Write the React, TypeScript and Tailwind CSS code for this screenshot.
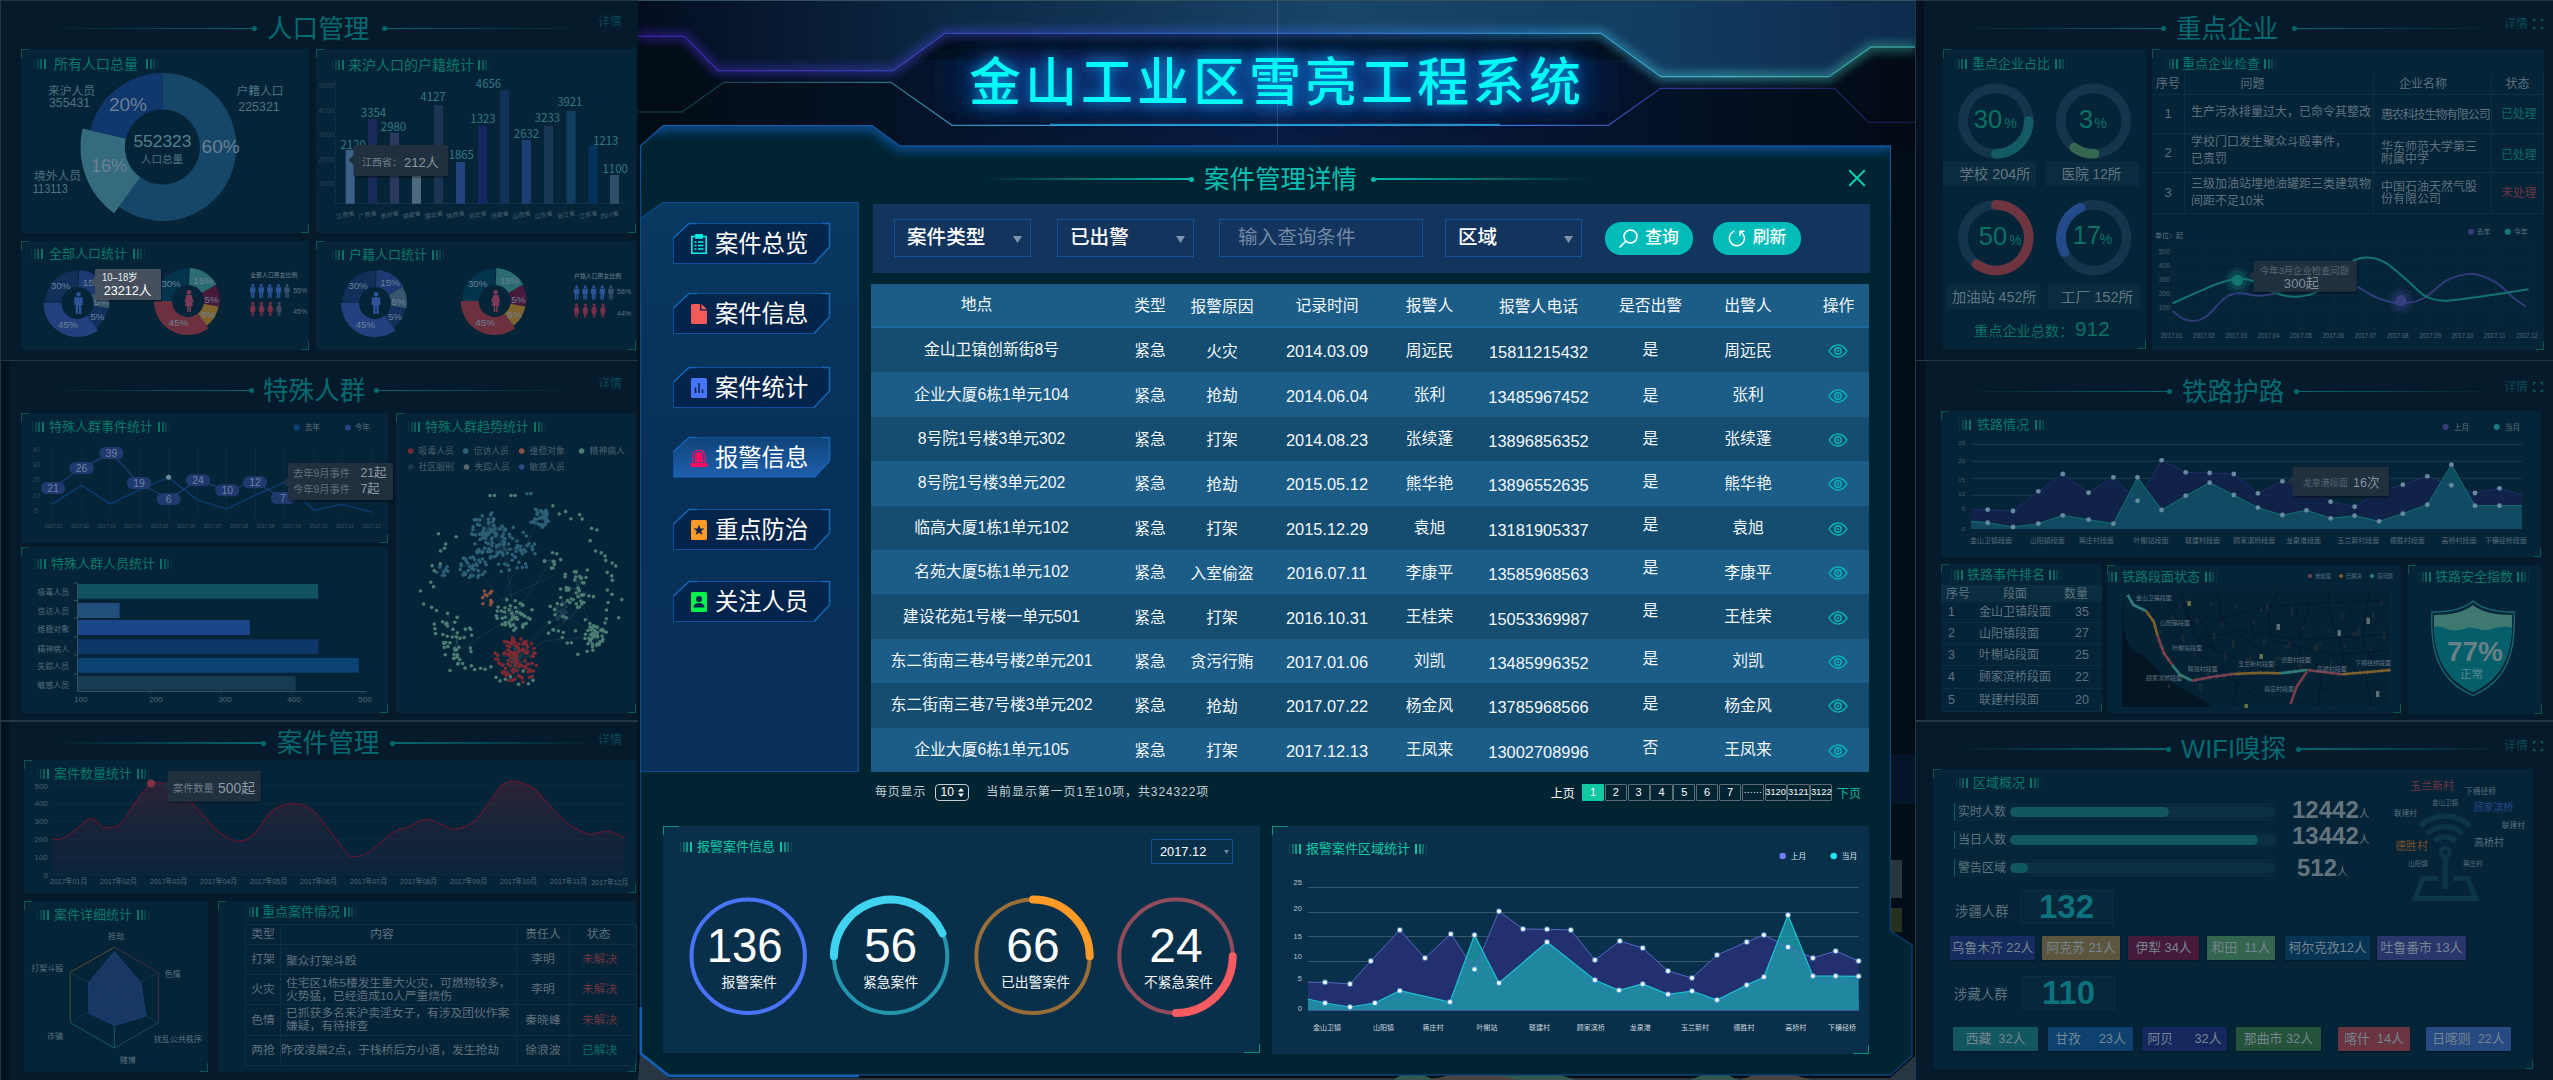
import React from 'react';

type Pt = [number, number];

/* ---------- geometry helpers ---------- */
const polar = (cx: number, cy: number, r: number, deg: number): Pt => {
  const a = ((deg - 90) * Math.PI) / 180;
  return [cx + r * Math.cos(a), cy + r * Math.sin(a)];
};
const arc = (cx: number, cy: number, r: number, a0: number, a1: number) => {
  const [x0, y0] = polar(cx, cy, r, a0);
  const [x1, y1] = polar(cx, cy, r, a1);
  return `M${x0} ${y0}A${r} ${r} 0 ${a1 - a0 > 180 ? 1 : 0} 1 ${x1} ${y1}`;
};
const sector = (cx: number, cy: number, r: number, ri: number, a0: number, a1: number) => {
  const [x0, y0] = polar(cx, cy, r, a0);
  const [x1, y1] = polar(cx, cy, r, a1);
  const [x2, y2] = polar(cx, cy, ri, a1);
  const [x3, y3] = polar(cx, cy, ri, a0);
  const big = a1 - a0 > 180 ? 1 : 0;
  return `M${x0} ${y0}A${r} ${r} 0 ${big} 1 ${x1} ${y1}L${x2} ${y2}A${ri} ${ri} 0 ${big} 0 ${x3} ${y3}Z`;
};
const line = (pts: Pt[]) => 'M' + pts.map((p) => p.join(' ')).join('L');
const curve = (p: Pt[]) => {
  let d = `M${p[0][0]} ${p[0][1]}`;
  for (let i = 0; i < p.length - 1; i++) {
    const a = p[i - 1] || p[i];
    const b = p[i];
    const c = p[i + 1];
    const e = p[i + 2] || c;
    d += `C${b[0] + (c[0] - a[0]) / 6} ${b[1] + (c[1] - a[1]) / 6} ${c[0] - (e[0] - b[0]) / 6} ${c[1] - (e[1] - b[1]) / 6} ${c[0]} ${c[1]}`;
  }
  return d;
};

/* Chart label: y is the vertical middle of the glyphs, w an optional exact width */
function T({ x, y, s, c = '#5d727f', a = 'middle', w, b, children }: {
  x: number; y: number; s: number; c?: string; a?: 'start' | 'middle' | 'end'; w?: number; b?: boolean; children: React.ReactNode;
}) {
  return (
    <text x={x} y={y + s * 0.36} fontSize={s} fill={c} textAnchor={a} fontWeight={b ? 700 : 400}
      {...(w ? { textLength: w, lengthAdjust: 'spacingAndGlyphs' as const } : {})}>
      {children}
    </text>
  );
}

const Chart = ({ box, children }: { box: string; children: React.ReactNode }) => (
  <svg viewBox={box} className="h-full w-full overflow-visible" preserveAspectRatio="none">{children}</svg>
);

/* ---------- shared pieces ---------- */
function Bars({ flip, bright }: { flip?: boolean; bright?: boolean }) {
  const col = bright ? 'bg-[#10c39c]' : 'bg-[#0b7565]';
  return (
    <span className={`flex h-[10px] w-[12px] items-stretch justify-between ${flip ? 'flex-row-reverse' : ''}`}>
      <i className={`w-px opacity-20 ${col}`} />
      <i className={`w-[2px] opacity-40 ${col}`} />
      <i className={`w-[2px] opacity-70 ${col}`} />
      <i className={`w-[2px] ${col}`} />
    </span>
  );
}

function Heading({ pos, bright, size = 'text-[13px]', gap = 'gap-[6px]', children }: {
  pos: string; bright?: boolean; size?: string; gap?: string; children: React.ReactNode;
}) {
  return (
    <h3 className={`z-10 flex items-center self-start whitespace-nowrap ${gap} ${size} ${pos} ${bright ? 'text-[#10c9a4]' : 'text-[#0a7868]'}`}>
      <Bars bright={bright} />
      <span className="h-4 leading-4">{children}</span>
      <Bars flip bright={bright} />
    </h3>
  );
}

function Card({ size, bright, children }: { size: string; bright?: boolean; children: React.ReactNode }) {
  const edge = bright ? 'border-[#0f8f7c]' : 'border-[#0a5650]';
  return (
    <div className={`relative grid shrink-0 grid-cols-1 grid-rows-1 *:[grid-area:1/1] ${bright ? 'bg-[#09304a]' : 'bg-[#052438]'} ${size}`}>
      <i className={`h-[9px] self-start border-l border-t ${edge} ${bright ? 'w-4' : 'w-2'}`} />
      <i className={`h-[9px] self-end justify-self-end border-b border-r ${edge} ${bright ? 'w-4' : 'w-2'}`} />
      {children}
    </div>
  );
}

const Dot = ({ bright }: { bright?: boolean }) => (
  <i className={`size-[5px] shrink-0 rounded-full ${bright ? 'bg-[#06bdb0]' : 'bg-[#05666d]'}`} />
);

function Panel({ title, frame, head, gap = 'mx-[10px]', detail, expand, children }: {
  title: string; frame: string; head: string; gap?: string; detail: string; expand?: boolean; children: React.ReactNode;
}) {
  return (
    <section className={`h-[360px] w-full border-[#253542] bg-[#051a2a] ${frame}`}>
      <header className={`flex items-center ${head}`}>
        <i className="h-[1.5px] w-[211px] shrink-0 bg-gradient-to-r from-transparent to-[#05666d]" />
        <Dot />
        <h2 className={`shrink-0 whitespace-nowrap text-[25.6px] leading-[28px] text-[#056a72] ${gap}`}>{title}</h2>
        <Dot />
        <i className="h-[1.5px] min-w-0 shrink basis-[206px] bg-gradient-to-r from-[#05666d] to-transparent" />
        <span className={`ml-auto flex shrink-0 items-center gap-[5px] self-start whitespace-nowrap text-[12px] leading-4 text-[#0a4855] ${detail}`}>
          详情
          {expand && (
            <svg viewBox="0 0 10 10" className="size-[10px]" fill="none" stroke="#0a5a5e" strokeWidth="1.2">
              <path d="M.6 3V.6H3M7 .6h2.4V3M9.4 7v2.4H7M3 9.4H.6V7" />
            </svg>
          )}
        </span>
      </header>
      {children}
    </section>
  );
}

function Tip({ x, y, w, h, py, light, children }: { x: number; y: number; w: number; h: number; py: number; light?: boolean; children: React.ReactNode }) {
  const f = light ? '#454f5e' : '#21303f';
  return (
    <g>
      <rect x={x + 1} y={y + 2} width={w} height={h} fill="#000" opacity=".3" />
      <rect x={x} y={y} width={w} height={h} rx="1" fill={f} />
      <path d={`M${x - 5} ${py}l6 -6v12z`} fill={f} />
      {children}
    </g>
  );
}

/* ---------- population ---------- */
const Person = ({ x, y, h, c, f }: { x: number; y: number; h: number; c: string; f?: boolean }) => (
  <g transform={`translate(${x} ${y}) scale(${h / 22})`} fill={c}>
    <circle cx="0" cy="2.3" r="2.3" />
    {f ? <path d="M-2.5 5h5l2.2 7-1.4.5-1-2.5 1.7 6H2v6H.4v-6H-.4v6H-2v-6h-2l1.7-6-1 2.5-1.4-.5z" />
      : <path d="M-4.3 5.2h8.6V13H2.8v9H.4v-8h-.8v8h-2.4v-9h-1.5z" />}
  </g>
);

const MALE = ['#1d3b72', '#38566f', '#12305c', '#23407f', '#10305a'];
const FEMALE = ['#2b6c70', '#471a3c', '#80622f', '#6c303f', '#03344e'];

function MiniDonut({ cx, cy, colors, female }: { cx: number; cy: number; colors: string[]; female?: boolean }) {
  const seg: [number, number, number][] = [[3, 60, 33], [60, 100, 32], [100, 143, 31], [143, 270, 34], [270, 361, 32.5]];
  const lab: [number, number, string][] = [[15, -20.5, '15%'], [23.7, -1.5, '5%'], [20, 13, '5%'], [-9.6, 21, '45%'], [-17, -17.5, '30%']];
  return (
    <g>
      {seg.map(([a, b, r], i) => <path key={i} d={sector(cx, cy, r, 16, a, b)} fill={colors[i]} />)}
      {lab.map(([dx, dy, t], i) => <T key={i} x={cx + dx} y={cy + dy} s={9.8} c="#6c8197">{t}</T>)}
      <Person x={cx + 1} y={cy - 11} h={22} c={female ? '#7d3a58' : '#2c5499'} f={female} />
    </g>
  );
}

function Ratio({ x, y, title, a, b }: { x: number; y: number; title: string; a: string; b: string }) {
  return (
    <g>
      <T x={x - 2.5} y={y} s={6} a="start" c="#71858f" w={title.length * 5.9}>{title}</T>
      {[0, 1, 2, 3, 4].map((i) => <Person key={i} x={x + i * 8.6} y={y + 9.5} h={14} c={i === 4 ? '#34506c' : '#2c5499'} />)}
      {[0, 1, 2, 3].map((i) => <Person key={i} x={x + i * 8.8} y={y + 27.5} h={14} c={i === 3 && a === '55%' ? '#3f4a58' : '#7d2f48'} f />)}
      <T x={x + 40.5} y={y + 15.5} s={7} a="start">{a}</T>
      <T x={x + 40.5} y={y + 37} s={7} a="start">{b}</T>
    </g>
  );
}

const PROVINCES: [string, number, number, string, string, number, number][] = [
  ['江西省', 345.7, 150, '#3a6087', '2120', 353.2, 145.3], ['广西省', 368, 119, '#1a2a58', '3354', 373.5, 112.7],
  ['贵州省', 390, 132.7, '#2a3a5e', '2980', 393.5, 127], ['湖南省', 412, 172, '#4f6980', '', 411, 168],
  ['湖北省', 434, 105, '#1c3352', '4127', 433, 96.7], ['陕西省', 456, 162, '#23437d', '1865', 461.3, 155],
  ['河北省', 478, 125.7, '#14275f', '1323', 483, 119], ['河南省', 500, 90.3, '#10325a', '4656', 488.5, 84],
  ['山西省', 522, 140, '#1b3f74', '2632', 526.5, 134], ['山东省', 544, 125.7, '#1a3756', '3233', 547.5, 118],
  ['浙江省', 566.5, 111, '#123d5e', '3921', 569.8, 102], ['江苏省', 588.6, 145.3, '#03335c', '1213', 605.8, 140.7],
  ['四川省', 610, 175, '#2f5068', '1100', 615.2, 169.3],
];

function Population() {
  return (
    <Panel title="人口管理" frame="border-l border-t" head="h-12 pl-[40px] pt-[7px]" gap="ml-[10px] mr-[13px]" detail="mt-[6px] pr-[16px]">
      <div className="grid grid-cols-[288px_320px] grid-rows-[184px_109px] gap-x-[7px] gap-y-2 pl-5">
        <Card size="">
          <Heading pos="pl-[13px] pt-[7px]" size="text-[14px]" gap="gap-[8px]">所有人口总量</Heading>
          <Chart box="21 49 288 184">
            <path d={sector(162.4, 147, 74, 37.5, 0, 216)} fill="#164768" />
            <path d={sector(162.4, 147, 82, 37.5, 216, 283)} fill="#356b7f" />
            <path d={sector(162.4, 147, 74, 37.5, 283, 360)} fill="#10376e" />
            <T x={71.5} y={90.7} s={11.8} c="#4b7581">来沪人员</T>
            <T x={69.6} y={102.7} s={12.4} c="#4b7581">355431</T>
            <T x={260} y={90.7} s={11.8} c="#4b7581">户籍人口</T>
            <T x={259} y={106.7} s={12.4} c="#4b7581">225321</T>
            <T x={57.5} y={175.7} s={11.8} c="#4b7581">境外人员</T>
            <T x={50.3} y={189} s={12.4} c="#4b7581" w={35}>113113</T>
            <T x={128} y={103.7} s={19} c="#6c8093">20%</T>
            <T x={220.6} y={145.7} s={19} c="#6c8093">60%</T>
            <T x={109} y={165.7} s={18} c="#6c8093">16%</T>
            <T x={162.4} y={140.7} s={17.4} c="#52828d">552323</T>
            <T x={162} y={159.3} s={10.6} c="#4b7581">人口总量</T>
          </Chart>
        </Card>
        <Card size="">
          <Heading pos="pl-[16px] pt-[8px]" size="text-[14px]" gap="gap-[4px]">来沪人口的户籍统计</Heading>
          <Chart box="316 49 320 184">
            {[5000, 4000, 3000, 2000, 1000].map((v, i) => <T key={v} x={334} y={85.7 + i * 24.5} s={7} a="end" c="#2c4656">{v}</T>)}
            <path d="M335.2 79V203.5H625" stroke="#123347" fill="none" />
            {PROVINCES.map(([n, x, y, f, v, lx, ly]) => (
              <g key={n}>
                <rect x={x} y={y} width="9" height={203.7 - y} fill={f} />
                {v && <text x={lx} y={ly + 4} fontSize="11.4" textAnchor="middle" fill="#357a84" className="[font-family:'Noto_Sans_CJK_SC']">{v}</text>}
                <text transform={`translate(${x} 217) rotate(-12)`} fontSize="6.2" textAnchor="middle" fill="#4a626f">{n}</text>
              </g>
            ))}
            <Tip x={353.5} y={145} w={95} h={31} py={160}>
              <T x={362} y={162} s={10} a="start" c="#71808c">江西省：</T>
              <T x={404} y={162} s={13} a="start" c="#8a97a1">212人</T>
            </Tip>
          </Chart>
        </Card>
        <Card size="">
          <Heading pos="pl-[10px] pt-[5px]">全部人口统计</Heading>
          <Chart box="21 241 288 109">
            <MiniDonut cx={77.5} cy={303} colors={MALE} />
            <MiniDonut cx={188} cy={301} colors={FEMALE} female />
            <Ratio x={252.7} y={274.5} title="全部人口男女比例" a="55%" b="45%" />
            <Tip x={95} y={269} w={66} h={31} py={282} light>
              <T x={102} y={277.7} s={10} a="start" c="#e8edf0" w={35.5}>10–18岁</T>
              <T x={103.7} y={290.7} s={13} a="start" c="#fff" w={47.7}>23212人</T>
            </Tip>
          </Chart>
        </Card>
        <Card size="">
          <Heading pos="pl-[16px] pt-[6px]" gap="gap-[5px]">户籍人口统计</Heading>
          <Chart box="316 241 320 109">
            <MiniDonut cx={375} cy={303} colors={MALE} />
            <MiniDonut cx={494.7} cy={301} colors={FEMALE} female />
            <Ratio x={576.5} y={276} title="户籍人口男女比例" a="56%" b="44%" />
          </Chart>
        </Card>
      </div>
    </Panel>
  );
}

/* ---------- special groups ---------- */
const BUBBLES: [number, number, number][] = [[21, 53, 488], [26, 81.6, 468], [39, 111.4, 453], [19, 139, 483], [6, 168.6, 499], [24, 198, 480.3], [10, 227.3, 490.3], [12, 255, 482.3], [7, 283, 498]];
const LAST_YEAR: Pt[] = [[52, 504], [81.6, 485.3], [110, 504], [139.6, 490], [168.6, 477.3], [197.5, 500], [226.5, 509], [255.5, 495], [284.5, 482.3], [314, 510.3], [342, 504.3], [372, 512.3]];
const GROUPS: [string, number, number, number, string, number][] = [
  ['吸毒人员', 584, 14.7, 318, '#125260', 592.3], ['信访人员', 603, 15, 119.6, '#224e7c', 611.3], ['维稳对象', 620, 15, 249.8, '#1c4688', 628.7],
  ['精神病人', 639.3, 14.7, 318.4, '#0c3768', 648.7], ['失踪人员', 658, 14.7, 358.8, '#0b4373', 666.3], ['敏感人员', 676, 14.7, 295.5, '#173b50', 685],
];
const KINDS: [string, string, number, number][] = [
  ['吸毒人员', '#7c2932', 410.6, 451], ['信访人员', '#2c6076', 465.7, 451], ['维稳对象', '#8a5440', 521.6, 451], ['精神病人', '#4b7d72', 581.6, 451],
  ['社区服刑', '#1a3650', 410.6, 467], ['失踪人员', '#5c666a', 466.5, 467], ['敏感人员', '#2a488c', 521.6, 467],
];

const makeNetwork = () => {
  let seed = 7;
  const rnd = () => {
    seed = (seed * 1664525 + 1013904223) % 4294967296;
    return seed / 4294967296;
  };
  const dots: [number, number, string][] = [];
  const links: [number, number, number, number][] = [];
  const clusters: [number, number, number, number, number, string, number][] = [
    [487.8, 531, 18, 19, 46, '#2c6076', 0.5], [539.6, 518, 10, 10, 38, '#2c6076', 0.3], [506, 550, 32, 24, 84, '#2c6076', 0.25],
    [473, 567, 14, 12, 36, '#2c6076', 0.3], [442, 570, 6, 7, 9, '#2c6076', 0.2], [514, 615, 19, 17, 46, '#4b7d72', 0.6],
    [594, 636, 11, 11, 38, '#4b7d72', 0.4], [577, 588, 18, 22, 34, '#4b7d72', 0.4], [561, 613, 7, 13, 26, '#1c3a50', 0.7],
    [457, 640, 18, 34, 34, '#4b7d72', 0.2], [570, 618, 28, 26, 26, '#4b7d72', 0.3], [516, 660, 22, 24, 106, '#7c2932', 0.5],
    [488, 598, 8, 8, 11, '#8a5440', 0.2], [552, 560, 9, 9, 10, '#4b7d72', 0.2],
  ];
  clusters.forEach(([cx, cy, rx, ry, n, c, link]) => {
    for (let i = 0; i < n; i++) {
      const a = rnd() * Math.PI * 2;
      const r = Math.pow(rnd(), 0.55);
      const x = cx + Math.cos(a) * rx * r;
      const y = cy + Math.sin(a) * ry * r;
      dots.push([x, y, c]);
      if (rnd() < link) links.push([cx, cy, x, y]);
    }
  });
  for (let i = 0; i < 26; i++) {
    const a = i * 13.8 * (Math.PI / 180);
    const n = 3 + Math.floor(rnd() * 3);
    for (let k = 0; k < n; k++) {
      const r = 0.84 + rnd() * 0.17;
      const t = a + k * 0.05;
      const x = 521 + Math.cos(t) * 101 * r;
      const y = 590 + Math.sin(t) * 96 * r;
      if (y > 505 && !(y > 655 && x > 535) && !(x < 540 && y < 530)) dots.push([x, y, '#4b7d72']);
    }
  }
  return { dots, links };
};
const NETWORK = makeNetwork();

function SpecialGroups() {
  return (
    <Panel title="特殊人群" frame="border-l border-t bg-[linear-gradient(to_right,#03121e_8px,#051a2a_8px)]" head="h-[52px] pl-[37px] pt-[7px]" gap="mx-[9px]" detail="mt-[8px] pr-[16px]">
      <div className="flex gap-[8px] pl-5">
        <div className="flex w-[367px] flex-col gap-1">
          <Card size="h-[130px]">
            <Heading pos="pl-[11px] pt-[6px]" gap="gap-[5px]">特殊人群事件统计</Heading>
            <Chart box="21 413 367 130">
              <circle cx="296.7" cy="427.5" r="3" fill="#0e4179" /><T x={312.5} y={427.5} s={7.6}>去年</T>
              <circle cx="347.8" cy="427.5" r="3" fill="#2a4180" /><T x={362.5} y={427.5} s={7.6}>今年</T>
              {['40', '30', '20', '10', '5'].map((v, i) => <T key={v} x={36.3} y={449 + i * 15.4} s={7} c="#2e4858">{v}</T>)}
              {LAST_YEAR.map(([x]) => <path key={x} d={`M${x} 448V518`} stroke="#0d2f44" strokeWidth=".8" />)}
              {['01', '02', '03', '04', '05', '06', '07', '08', '08', '09', '10', '11', '12'].map((m, i) => (
                <T key={i} x={53.5 + i * 26.5} y={526} s={5.8} c="#3c5564" w={18}>{`2017.${m}`}</T>
              ))}
              <path d={line(LAST_YEAR)} stroke="#0c3a6c" strokeWidth="1.6" fill="none" />
              <path d={line(BUBBLES.map(([, x, y]) => [x, y]))} stroke="#20396c" strokeWidth="1.4" fill="none" />
              {BUBBLES.map(([v, x, y]) => (
                <g key={v + ':' + x}>
                  <rect x={x - 12} y={y - 6} width="24" height="12" rx="5.5" fill="#20396f" />
                  <T x={x} y={y} s={10.5} c="#6f83a0">{v}</T>
                </g>
              ))}
              <circle cx="168.6" cy="477.3" r="2.5" fill="#6d8b9c" />
              <Tip x={288} y={463} w={105} h={37} py={482}>
                <T x={293} y={473.3} s={10.3} a="start" c="#5f707d" w={57}>去年9月事件</T><T x={360.4} y={472.7} s={12.3} a="start" c="#8d99a4">21起</T>
                <T x={293} y={489.3} s={10.3} a="start" c="#5f707d" w={57}>今年9月事件</T><T x={360.4} y={488.7} s={12.3} a="start" c="#8d99a4">7起</T>
              </Tip>
            </Chart>
          </Card>
          <Card size="h-[166px]">
            <Heading pos="pl-[13px] pt-[9px]" gap="gap-[5px]">特殊人群人员统计</Heading>
            <Chart box="21 547 367 166">
              {GROUPS.map(([n, y, h, x, f, ty]) => (
                <g key={n}>
                  <rect x="78" y={y} width={x - 78} height={h} fill={f} />
                  <T x={53.3} y={ty} s={7.9} c="#566c7a">{n}</T>
                </g>
              ))}
              <path d="M77.5 582.5V691.5H366.5M74 583h3M74 600.5h3M74 618h3M74 637h3M74 655h3M74 674h3M150 691v2.5M221 691v2.5M292 691v2.5M363 691v2.5" stroke="#33505f" fill="none" />
              {[[100, 80.8], [200, 156], [300, 225], [400, 294], [500, 365]].map(([v, x]) => <T key={v} x={x} y={699.3} s={8} c="#566c7a">{v}</T>)}
            </Chart>
          </Card>
        </div>
        <Card size="h-[300px] w-[240px]">
          <Heading pos="pl-[12px] pt-[6px]" gap="gap-[5px]">特殊人群趋势统计</Heading>
          <Chart box="396 413 240 300">
            {KINDS.map(([n, c, x, y]) => (
              <g key={n}><circle cx={x} cy={y} r="2.8" fill={c} /><T x={x + 8} y={y} s={8.8} a="start" c="#4a606d">{n}</T></g>
            ))}
            <path d="M487 531L506 560L514 615L516 660M539 518L506 590M514 615L475 567M514 615L552 560M594 636L545 641L516 660M594 636L577 588M514 615L460 650M561 613L520 650M555 575L500 600" stroke="#173c50" fill="none" strokeWidth=".7" />
            {NETWORK.links.map(([a, b, c, d], i) => <path key={i} d={`M${a} ${b}L${c} ${d}`} stroke="#2a5062" strokeWidth=".4" />)}
            {NETWORK.dots.map(([x, y, c], i) => <circle key={i} cx={x} cy={y} r="1.8" fill={c} />)}
            {([[490, 495.5], [494.5, 495.5], [511, 495.5], [515, 495.5]] as Pt[]).map(([x, y]) => <circle key={x} cx={x} cy={y} r="1.8" fill="#4b7d72" />)}
            {([[527, 493.8], [531, 493.6]] as Pt[]).map(([x, y]) => <circle key={x} cx={x} cy={y} r="1.8" fill="#2c6076" />)}
          </Chart>
        </Card>
      </div>
    </Panel>
  );
}

/* ---------- cases ---------- */
const CASES: Pt[] = [[52, 839], [61, 838.7], [73.5, 831.7], [90.6, 818.7], [104, 827.3], [120.4, 824], [134.7, 803.3], [151, 784], [167.3, 784.3], [183.7, 795], [200, 811.7], [220.4, 833.3], [240, 841.3], [255, 833.3], [271.4, 811.7], [292.2, 803.7], [312.2, 810], [326.5, 826.7], [347, 853.3], [354.3, 856.7], [369.4, 851.7], [393.9, 831.7], [408, 827.3], [425.3, 819.3], [440.8, 824], [453.9, 829.3], [473.5, 821.7], [489.8, 801.7], [502, 785], [515.5, 781.3], [534.7, 789.3], [555, 811.7], [571.4, 826], [589.8, 834], [608, 831.3], [625, 838]];
const KEY_CASES: [string, string[], string, string][] = [
  ['打架', ['聚众打架斗殴'], '李明', '未解决'],
  ['火灾', ['住宅区1栋5楼发生重大火灾，可燃物较多，', '火势猛，已经造成10人严重烧伤'], '李明', '未解决'],
  ['色情', ['已抓获多名来沪卖淫女子，有涉及团伙作案', '嫌疑，有待排查'], '秦晓峰', '未解决'],
  ['两抢', ['昨夜凌晨2点，于栈桥后方小道，发生抢劫'], '徐浪波', '已解决'],
];

function Cases() {
  return (
    <Panel title="案件管理" frame="border-l border-t-2 bg-[linear-gradient(to_right,#03121e_8px,#051a2a_8px)]" head="h-[38px] pl-[49px] pt-[4px]" gap="mx-[11px]" detail="mt-[6px] pr-[16px]">
      <div className="flex flex-col gap-2 pl-[23px]">
        <Card size="h-[133px] w-[612px]">
          <Heading pos="pl-[13px] pt-[6px]" gap="gap-[5px]">案件数量统计</Heading>
          <Chart box="24 760 612 133">
            <defs><linearGradient id="caseFill" x1="0" y1="0" x2="0" y2="1"><stop offset="0" stopColor="#7a1f35" stopOpacity=".34" /><stop offset="1" stopColor="#3a2045" stopOpacity=".12" /></linearGradient></defs>
            {[500, 400, 300, 200, 100, 0].map((v, i) => (
              <g key={v}><T x={47.8} y={785.7 + i * 17.8} s={8} a="end" c="#4a606d">{v}</T><path d={`M52 ${785.7 + i * 17.8}H625`} stroke="#0b2e42" strokeWidth=".8" /></g>
            ))}
            <path d={curve(CASES) + 'L625 874.5L52 874.5Z'} fill="url(#caseFill)" />
            <path d={curve(CASES)} stroke="#5c1930" strokeWidth="1.2" fill="none" />
            {Array.from({ length: 12 }, (_, i) => (
              <T key={i} x={i === 11 ? 610 : 68.6 + i * 50} y={i === 11 ? 881.7 : 881} s={7.8} c="#556b78" w={37}>{`2017年${String(i + 1).padStart(2, '0')}月`}</T>
            ))}
            <circle cx="151" cy="783.5" r="3.6" fill="#8f2a42" stroke="#6e4a58" strokeWidth=".8" />
            <Tip x={167.8} y={771} w={93} h={30.7} py={785.7}>
              <T x={173} y={788.7} s={10.2} a="start" c="#6d7a86">案件数量</T><T x={218} y={787.5} s={14} a="start" c="#8d99a4" w={37}>500起</T>
            </Tip>
          </Chart>
        </Card>
        <div className="flex gap-[10px]">
          <Card size="h-[171px] w-[184px]">
            <Heading pos="pl-[13px] pt-[6px]" gap="gap-[5px]">案件详细统计</Heading>
            <Chart box="24 901 184 171">
              <g fill="none" strokeWidth=".9">
                <path d="M70.2 972.3L114.3 947.3" stroke="#6b5230" /><path d="M114.3 947.3L158.4 972.3V1022.7" stroke="#4a2f45" />
                <path d="M70.2 972.3V1022.7" stroke="#47583a" /><path d="M70.2 1022.7L114.3 1048V997" stroke="#1a6068" /><path d="M114.3 1048L158.4 1022.7" stroke="#1c4f6c" />
                <path d="M114.3 997L70.2 1022.7M114.3 997L158.4 1022.7M114.3 997L70.2 972.3M114.3 997L158.4 972.3" stroke="#123a50" />
              </g>
              <path d="M114.3 951.7L140.8 982.7L146 1016L114.3 1025.3L89 1013.3L88.6 982.7Z" fill="#1b3a68" stroke="#1c3f7c" fillOpacity=".9" />
              <T x={116} y={936.3} s={8}>抢劫</T><T x={172.7} y={974.3} s={8}>色情</T><T x={178} y={1039} s={8}>扰乱公共秩序</T>
              <T x={127.8} y={1060} s={8}>赌博</T><T x={55} y={1036} s={8}>诈骗</T><T x={47.3} y={968.3} s={8}>打架斗殴</T>
            </Chart>
          </Card>
          <Card size="h-[171px] w-[418px]">
            <Heading pos="pl-[28px] pt-[3px]" gap="gap-[4px]">重点案件情况</Heading>
            <div className="ml-[27px] mt-[23px] grid h-[142px] w-[391px] grid-cols-[35px_236px_53px_67px] grid-rows-[20px_30px_30px_31px_30px] border-l border-t border-[#0b3144] text-[11.8px] leading-[13px] text-[#5f717d] *:border-b *:border-r *:border-[#0b3144]">
              {['类型', '内容', '责任人', '状态'].map((h) => (
                <div key={h} className={`flex items-center justify-center ${h === '内容' ? 'pr-[33px]' : h === '状态' ? 'pr-[9px]' : ''}`}>{h}</div>
              ))}
              {KEY_CASES.map(([k, lines, who, st], i) => (
                <React.Fragment key={k}>
                  <div className="flex items-center justify-center">{k}</div>
                  <div className={`flex flex-col justify-center whitespace-nowrap ${i === 3 ? '' : 'pl-[5px]'} ${i === 0 ? 'pt-[3px]' : ''}`}>{lines.map((l) => <span key={l} className="tracking-[-0.05px]">{l}</span>)}</div>
                  <div className="flex items-center justify-center">{who}</div>
                  <div className={`flex items-center pl-[12px] ${st === '已解决' ? 'text-[#0d6a62]' : 'text-[#6a3541]'}`}>{st}</div>
                </React.Fragment>
              ))}
            </div>
          </Card>
        </div>
      </div>
    </Panel>
  );
}

/* ---------- enterprises ---------- */
const CHECK_NOW: Pt[] = [[2172.6, 303.3], [2198.7, 291.7], [2219, 283.3], [2237.5, 278.7], [2255.9, 281.7], [2276.3, 293.3], [2296.7, 296.7], [2317, 291.7], [2333.4, 276.7], [2353.8, 260.7], [2370, 257.7], [2386.5, 263.3], [2406.9, 280], [2425.2, 296], [2443.6, 300.7], [2468, 298.3], [2496.7, 294.3], [2528.5, 289.3]];
const CHECK_LAST: Pt[] = [[2172.6, 311], [2182.4, 318.3], [2193.8, 321], [2206.9, 316], [2225.2, 297.7], [2239.5, 293.3], [2260, 295.7], [2280.3, 291.7], [2304.8, 281.7], [2329.3, 276.7], [2353.8, 285], [2378.3, 298.3], [2400.8, 303.3], [2423.2, 298.3], [2447.7, 280], [2472.2, 274], [2494.6, 281.7], [2513, 297.3], [2525.7, 306.7]];
const GAUGES: [number, number, number, number, string, string, number, number][] = [
  [1995.9, 121, 90, 180, '#125b64', '30', 1988, 119], [2093.4, 121, 178, 216, '#356650', '3', 2086, 119],
  [1995.9, 237.7, 0, 216, '#6e3541', '50', 1993, 236.3], [2093.8, 237.7, 244, 336, '#234a8b', '17', 2087, 235],
];
const CHECKS: [string, string[], string[], string][] = [
  ['1', ['生产污水排量过大，已命令其整改'], ['惠农科技生物有限公司'], '已处理'],
  ['2', ['学校门口发生聚众斗殴事件，', '已责罚'], ['华东师范大学第三', '附属中学'], '已处理'],
  ['3', ['三级加油站埋地油罐距三类建筑物', '间距不足10米'], ['中国石油天然气股', '份有限公司'], '未处理'],
];

function Enterprises() {
  return (
    <Panel title="重点企业" frame="border-l border-t bg-[linear-gradient(to_right,#03121e_8px,#051a2a_8px)]" head="h-12 pl-[34px] pt-[7px]" gap="ml-[10px] mr-[14px]" detail="mt-[8px] pr-[10px]" expand>
      <div className="flex gap-[6px] pl-[27px]">
        <Card size="h-[300px] w-[203px]">
          <Heading pos="pl-[12px] pt-[7px]" gap="gap-[5px]">重点企业占比</Heading>
          <Chart box="1943 49 203 300">
            {GAUGES.map(([x, y, a, b, c, v, tx, ty]) => (
              <g key={v}>
                <circle cx={x} cy={y} r="32.8" fill="none" stroke="#14364c" strokeWidth="9.6" />
                <path d={arc(x, y, 32.8, a, b)} fill="none" stroke={c} strokeWidth="9.6" strokeLinecap="round" />
                <T x={tx} y={ty} s={25.5} c="#0b7263">{v}</T>
                <T x={tx + (v === '3' ? 14.5 : v === '17' ? 18.8 : 22.5)} y={ty + 3.5} s={14.2} c="#0b7263">%</T>
              </g>
            ))}
            {([[1943.6, 162.3, '学校 204所', 1995, 71.5], [2046.5, 162.3, '医院 12所', 2091.5, 59.5], [1947, 285, '加油站 452所', 1994.3, 84.5], [2048, 285, '工厂  152所', 2097, 72.5]] as [number, number, string, number, number][]).map(([x, y, t, tx, w]) => (
              <g key={t}>
                <rect x={x} y={y} width="92" height="23.4" fill="#0a2c3e" stroke="#0c3246" strokeWidth=".6" />
                <T x={tx} y={y + 12} s={13.8} c="#637783" w={w}>{t}</T>
              </g>
            ))}
            <T x={1974} y={331} s={14.2} a="start" c="#0b7263">重点企业总数：</T>
            <T x={2075} y={328.5} s={20.8} a="start" c="#0b7263">912</T>
          </Chart>
        </Card>
        <Card size="h-[301px] w-[392px]">
          <Heading pos="pl-[14px] pt-[7px]" gap="gap-[4px]">重点企业检查</Heading>
          <div className="flex flex-col">
            <div className="mt-[25px] grid h-[140px] grid-cols-[33px_189px_118px_52px] grid-rows-[21px_39px_39px_41px] text-[12px] leading-[12.5px] text-[#5f717d] *:border-b *:border-r *:border-[#0b3144]">
              {['序号', '问题', '企业名称', '状态'].map((h) => (
                <div key={h} className={`flex items-center justify-center ${h === '问题' ? 'pr-[53px]' : h === '企业名称' ? 'pr-[19px]' : ''}`}>{h}</div>
              ))}
              {CHECKS.map(([n, q, co, st], i) => (
                <React.Fragment key={n}>
                  <div className="flex items-center justify-center text-[13px]">{n}</div>
                  <div className={`flex flex-col justify-center whitespace-nowrap pl-[6px] ${q.length > 1 ? 'leading-[17px]' : 'pb-[3px]'} ${i === 1 ? 'pb-[4px]' : ''}`}>{q.map((l) => <span key={l}>{l}</span>)}</div>
                  <div className={`flex flex-col justify-center whitespace-nowrap pl-[7px] ${co.length > 1 ? '' : 'pt-[2px] tracking-[-1.15px]'}`}>{co.map((l) => <span key={l}>{l}</span>)}</div>
                  <div className={`flex items-center pl-[9px] tracking-[-0.2px] ${i === 1 ? 'pt-[5px]' : ''} ${st === '未处理' ? 'text-[#6a3541]' : 'text-[#0d6a62]'}`}>{st}</div>
                </React.Fragment>
              ))}
            </div>
            <div className="h-[135px]">
              <Chart box="2152 214 392 135">
                <circle cx="2471" cy="231.7" r="3" fill="#363c7c" /><T x={2483.8} y={231.7} s={7}>去年</T>
                <circle cx="2507.7" cy="231.7" r="3" fill="#147a78" /><T x={2520.8} y={231.7} s={7}>今年</T>
                <T x={2155} y={235.7} s={7.2} a="start" w={28}>单位：起</T>
                {[500, 400, 300, 200, 100].map((v, i) => (
                  <g key={v}><T x={2170} y={251.7 + i * 13.9} s={6.8} a="end" c="#4a606d">{v}</T><path d={`M2173 ${247 + i * 16.2}H2528`} stroke="#0a2c40" strokeWidth=".8" /></g>
                ))}
                {Array.from({ length: 12 }, (_, i) => (
                  <g key={i}><T x={2171.8 + i * 32.3} y={335.7} s={6.5} c="#566c7a" w={21.5}>{`2017.${String(i + 1).padStart(2, '0')}`}</T><path d={`M${2173 + i * 32.3} 242V327`} stroke="#0a2c40" strokeWidth=".8" /></g>
                ))}
                <path d={curve(CHECK_LAST)} stroke="#313b7a" strokeWidth="2" fill="none" />
                <path d={curve(CHECK_NOW)} stroke="#12736f" strokeWidth="2" fill="none" />
                <g fill="#14756f"><circle cx="2237.5" cy="280.3" r="13" opacity=".18" /><circle cx="2237.5" cy="280.3" r="9.5" opacity=".3" /><circle cx="2237.5" cy="280.3" r="5.6" /></g>
                <g fill="#363f80"><circle cx="2401" cy="300.7" r="13" opacity=".18" /><circle cx="2401" cy="300.7" r="9.5" opacity=".3" /><circle cx="2401" cy="300.7" r="5.6" /></g>
                <Tip x={2253.8} y={261} w={103} h={30.7} py={276}>
                  <T x={2304.5} y={270.7} s={9.6} c="#586774" w={89}>今年3月企业检查问题</T><T x={2301.4} y={283.7} s={13.2} c="#7f8c98">300起</T>
                </Tip>
              </Chart>
            </div>
          </div>
        </Card>
      </div>
    </Panel>
  );
}

/* ---------- railway ---------- */
const RX = [1971, 1987.7, 2013, 2038.3, 2062.8, 2088.5, 2113.4, 2137.5, 2161.6, 2185.7, 2209.7, 2233.8, 2257.9, 2282.4, 2306.5, 2330.6, 2354.6, 2379.1, 2402.8, 2427.3, 2451.4, 2475, 2499.5, 2522];
const RLAST = [509.3, 509.7, 511, 491.3, 474, 492.7, 477.3, 500.7, 460.3, 472.3, 473, 474, 493.3, 481.3, 485, 501.7, 506.7, 491, 484.7, 476.3, 485.3, 493, 488.3, 495].map((y, i): Pt => [RX[i], y]);
const RNOW = [521.3, 522.7, 527, 523.7, 515.3, 519.7, 523.7, 477.3, 510, 495.7, 482.7, 495, 507.7, 515, 510.3, 518.3, 515.7, 521.3, 513.7, 504.7, 464.7, 505.7, 505.7, 505.7].map((y, i): Pt => [RX[i], y]);
const STATIONS = ['金山卫镇', '山阳镇', '蒋庄村', '叶榭站', '联建村', '顾家滨桥', '龙泉港', '玉兰新村', '德胜村', '高桥村', '下横径桥'];
const RLX = [1991, 2047.3, 2096.3, 2151, 2202.4, 2254.2, 2303.6, 2358.3, 2407.3, 2459, 2505.7];
const RAIL: Pt[] = [[2127.7, 595], [2133.4, 605], [2145.7, 610.7], [2153.8, 621.7], [2157.9, 636.7], [2164, 653.3], [2172.2, 665], [2180.3, 675], [2191.8, 680.7], [2213, 676.7], [2233.4, 674], [2259.9, 672.7], [2280.3, 673.3], [2306.9, 670], [2321.2, 671.7], [2341.6, 674.3], [2366, 672.3], [2390.6, 670]];
const RAIL_PARTS: [number, number, string][] = [[0, 2, '#2b8079'], [2, 4, '#806027'], [4, 6, '#7b3d4b'], [6, 8, '#2b8079'], [8, 10, '#7b3d4b'], [10, 12, '#806027'], [12, 13, '#2b8079'], [13, 15, '#7b3d4b'], [15, 17, '#806027']];
const MAP_LABELS: [string, number, number][] = [['金山卫镇', 2153.8, 597.7], ['山阳镇', 2175, 623], ['叶榭站', 2186.9, 648], ['联建村', 2202.8, 669], ['顾家滨桥', 2164, 678], ['玉兰新村', 2255.9, 664], ['德胜村', 2295.9, 660], ['高桥村', 2331.8, 669], ['下横径桥', 2373, 663], ['蒋庄村', 2279, 689]];

function Railway() {
  return (
    <Panel title="铁路护路" frame="border-l border-t bg-[linear-gradient(to_right,#03121e_10px,#051a2a_10px)]" head="h-[50px] pl-[40px] pt-[11px]" gap="mx-[10px]" detail="mt-[7px] pr-[10px]" expand>
      <div className="flex flex-col gap-[7px] pl-[25px]">
        <Card size="h-[146px] w-[600px]">
          <Heading pos="pl-[18px] pt-[6px]" gap="gap-[6px]">铁路情况</Heading>
          <Chart box="1941 411 600 146">
            <circle cx="2445.7" cy="427" r="3" fill="#363c7c" /><T x={2461.5} y={427} s={7.7}>上月</T>
            <circle cx="2496.7" cy="427" r="3" fill="#147a82" /><T x={2512.5} y={427} s={7.7}>当月</T>
            {[[25, 443], [20, 460.7], [15, 479.7], [10, 494], [5, 509], [0, 529]].map(([v, y]) => <T key={v} x={1965} y={y} s={6} a="end" c="#4a606d">{v}</T>)}
            <path d="M1971 444.3H2522M1971 461.3H2522M1971 478.3H2522M1971 495.3H2522" stroke="#1f3d50" />
            <path d={line(RLAST) + 'L2522 529L1971 529Z'} fill="#12234b" fillOpacity=".92" />
            <path d={line(RLAST)} stroke="#1f2f68" fill="none" />
            <path d={line(RNOW) + 'L2522 529L1971 529Z'} fill="#125a6c" fillOpacity=".75" />
            <path d={line(RNOW)} stroke="#12716f" fill="none" />
            {[...RLAST.slice(1, -1), ...RNOW.slice(1, -1)].map(([x, y]) => <circle key={x + ':' + y} cx={x} cy={y} r="2.4" fill="#668ba0" />)}
            {STATIONS.map((s, i) => <T key={s} x={RLX[i]} y={540.5} s={7} c="#566c7a">{`${s}段面`}</T>)}
            <Tip x={2292.6} y={467} w={96.4} h={29} py={481.5}>
              <T x={2302.8} y={483} s={9} a="start" c="#586774">龙泉港段面</T><T x={2353} y={482.7} s={13} a="start" c="#8592a0" w={26.5}>16次</T>
            </Tip>
          </Chart>
        </Card>
        <div className="flex items-start gap-[5px]">
          <Card size="h-[148px] w-[161px]">
            <Heading pos="pl-[10px] pt-[3px]" gap="gap-[4px]">铁路事件排名</Heading>
            <div className="mt-[21px] grid h-[127px] grid-cols-[38px_1fr_46px] grid-rows-[17px_21px_22px_21px_23px_23px] items-stretch text-[12px] text-[#5f737f]">
              {['序号', '段面', '数量'].map((h) => <div key={h} className={`flex items-center bg-[#0a2d3f] ${h === '序号' ? 'pl-[5px]' : h === '段面' ? 'pl-[24px]' : 'pl-[8px]'}`}>{h}</div>)}
              {[['金山卫镇', 35], ['山阳镇', 27], ['叶榭站', 25], ['顾家滨桥', 22], ['联建村', 20]].map(([n, v], i) => (
                <div key={i} className="col-span-3 grid grid-cols-subgrid items-center border-b border-[#0a2f42] text-[12px]">
                  <span className="pl-[7px] text-[12.5px]">{i + 1}</span><span>{n}段面</span><span className="pr-[13px] text-right text-[12.5px]">{v}</span>
                </div>
              ))}
            </div>
          </Card>
          <Card size="mt-px h-[148px] w-[294px]">
            <Heading pos="-ml-[2px] pt-[4px]" gap="gap-[5px]">铁路段面状态</Heading>
            <Chart box="2107 565 294 148">
              {([[2310, '#7b3d4b', '未处理'], [2341, '#806027', '已解决'], [2372, '#2b8079', '没问题']] as [number, string, string][]).map(([x, c, t]) => (
                <g key={t}><circle cx={x} cy="576" r="2" fill={c} /><T x={x + 5} y={576.3} s={5.3} a="start">{t}</T></g>
              ))}
              <rect x="2122" y="589.5" width="268.6" height="117.5" fill="#052235" stroke="#0c2c3e" strokeWidth=".6" />
              <path d="M2122 600C2124 620 2122 640 2134 652C2150 655 2152 668 2172 683C2190 692 2200 698 2212 707H2122Z" fill="#031522" />
              <g stroke="#04192a" strokeWidth="1.1" fill="none">
                <path d="M2150 590L2165 601L2215 620L2265 607L2320 603L2390 600M2180 590L2196 640L2238 660M2217 590L2222 620L2260 650L2262 672M2280 590L2268 610L2272 640M2328 590L2330 618L2340 640L2345 672M2370 590L2362 640L2378 672M2196 640L2240 630L2300 640L2390 634M2160 625L2190 620L2222 660M2200 655L2260 700M2240 672L2232 707M2300 640L2310 600M2272 640L2335 655L2390 650M2322 672L2318 707M2365 673L2372 707M2205 625L2215 650" />
                <path d="M2172 608l12 30M2182 604l12 30M2192 600l14 34M2248 606l8 40M2296 600l4 58M2312 640l4 30M2350 606l6 34M2290 690h60M2330 690l6 16" strokeWidth=".8" />
              </g>
              <g fill="#2c3236" opacity=".55">
                {Array.from({ length: 46 }, (_, i) => <rect key={i} x={2160 + ((i * 53) % 226)} y={596 + ((i * 37) % 66) + (i % 5 === 0 ? 34 : 0)} width="2.4" height={4 + (i % 3) * 2} />)}
              </g>
              <g fill="#5c6f76"><rect x="2276.5" y="624" width="3.4" height="6" /><rect x="2337.5" y="630" width="3.4" height="6" /><rect x="2366.5" y="618" width="3.4" height="6" /><rect x="2376" y="691" width="3.4" height="6" /></g>
              <g fill="#667347"><rect x="2187.5" y="601" width="3.4" height="5" /><rect x="2259.5" y="654" width="3.4" height="5" /><rect x="2244.5" y="704" width="3.4" height="4" /></g>
              {RAIL_PARTS.map(([a, b, c]) => <path key={a} d={line(RAIL.slice(a, b + 1))} stroke={c} strokeWidth="2.6" fill="none" />)}
              <path d="M2306.9 671.7L2296.7 686.7L2290.6 704" stroke="#7b3d4b" strokeWidth="2.6" fill="none" />
              <path d={line(RAIL)} stroke="#5b6468" strokeWidth="4.4" strokeDasharray="1.2 6" fill="none" opacity=".5" />
              {MAP_LABELS.map(([n, x, y]) => <T key={n} x={x} y={y} s={6} c="#63757f">{`${n}段面`}</T>)}
            </Chart>
          </Card>
          <Card size="ml-[2px] mt-px h-[149px] w-[134px]">
            <Heading pos="pl-[11px] pt-[4px]" gap="gap-[4px]">铁路安全指数</Heading>
            <Chart box="2408 565 134 149">
              <defs><clipPath id="shield"><path d="M2473 605C2465 612 2450 615 2434 615C2433 650 2440 676 2473 692C2506 676 2513 650 2512 615C2496 615 2481 612 2473 605Z" /></clipPath></defs>
              <path d="M2473 601C2464 609 2448 612 2432 612C2430 650 2438 681 2473 695.5C2508 681 2516 650 2514 612C2498 612 2482 609 2473 601Z" fill="#06273a" stroke="#1b6a75" strokeWidth="1.3" />
              <g clipPath="url(#shield)">
                <rect x="2430" y="600" width="90" height="100" fill="#3f7871" />
                <path d="M2430 630C2436 625 2441 626 2447 629S2461 630 2467 628S2480 631 2487 630S2503 624 2516 629V700H2430Z" fill="#045f6a" />
              </g>
              <T x={2475} y={651} s={28} b c="#6a8087" w={56}>77%</T>
              <T x={2471.5} y={674} s={11.6} c="#5b8890">正常</T>
            </Chart>
          </Card>
        </div>
      </div>
    </Panel>
  );
}

/* ---------- wifi ---------- */
const WORDS: [string, number, number, number, string][] = [
  ['玉兰新村', 2432, 789.3, 11, '#6e3541'], ['下横径桥', 2480.5, 794.3, 7.7, '#57707d'], ['金山卫镇', 2445, 805.7, 6.5, '#57707d'],
  ['顾家滨桥', 2493.5, 810.7, 9.9, '#24498c'], ['联建村', 2405.5, 816.3, 7.7, '#57707d'], ['联建村', 2513.3, 828.3, 7.7, '#57707d'],
  ['德胜村', 2411.5, 849.3, 10.8, '#75502a'], ['高桥村', 2489, 845.7, 9.8, '#57707d'], ['山阳镇', 2418, 866.7, 6.5, '#57707d'], ['蒋庄村', 2472.7, 866.7, 6.5, '#57707d'],
];
const METERS: [string, string][] = [['实时人数', 'w-[159px]'], ['当日人数', 'w-[248px]'], ['警告区域', 'w-[18px]']];

function Wifi() {
  const tag = 'flex h-6 items-center justify-center gap-1 whitespace-pre rounded-[1px] text-[12.8px] leading-6 text-[#75858f] shadow-[0_1px_2px_rgba(0,0,0,.4)]';
  return (
    <Panel title="WIFI嗅探" frame="border-l border-t-2" head="h-[47px] pl-[39px] pt-[7px]" gap="mx-[10px]" detail="mt-[9px] pr-[10px]" expand>
      <div className="pl-[17px]">
        <Card size="h-[300px] w-[600px]">
          <Heading pos="pl-[23px] pt-[6px]" gap="gap-[5px]">区域概况</Heading>
          <div className="flex flex-col">
            <div className="flex h-[121px]">
              <div className="flex w-[343px] shrink-0 flex-col gap-[10px] pl-[21px] pt-[34px]">
                {METERS.map(([n, w]) => (
                  <div key={n} className="flex h-[18px] items-center border-l border-[#0f5a66] bg-[#07283a] pl-[3px] text-[12px] leading-[18px] text-[#5f737f]">
                    <span className="w-[52px] shrink-0">{n}</span>
                    <span className="flex h-[10px] grow rounded-full bg-[#0a3041]"><i className={`rounded-full bg-[#12565f] ${w}`} /></span>
                  </div>
                ))}
              </div>
              <div className="flex flex-col pl-[16px] pt-[28px] text-[24px] font-bold leading-[26px] text-[#63747f]">
                {['12442', '13442', '512'].map((v, i) => (
                  <div key={v} className={`flex h-[26px] items-baseline ${i === 2 ? 'mt-[6px] pl-[5px]' : ''}`}>{v}<small className="text-[11px] font-normal leading-none">人</small></div>
                ))}
              </div>
              <div className="ml-auto h-[143px] w-[150px] shrink-0">
                <Chart box="2383 772 150 143">
                  <g stroke="#0c3547" fill="none" strokeWidth="5.5">
                    <path d={arc(2445.2, 855, 36, -44, 44)} /><path d={arc(2445.2, 855, 25.5, -44, 44)} strokeWidth="5" /><path d={arc(2445.2, 855, 15, -44, 44)} strokeWidth="5" />
                    <circle cx="2445.2" cy="855.5" r="4.5" strokeWidth="4" /><path d="M2445.2 860V892" strokeWidth="6" />
                    <path d="M2438 881.5H2423L2415 901.5H2475.5L2468 881.5H2453" strokeWidth="5" />
                  </g>
                  {WORDS.map(([t, x, y, s, c]) => <T key={t + x} x={x} y={y} s={s} c={c}>{t}</T>)}
                </Chart>
              </div>
            </div>
            <div className="flex h-[34px] items-center pl-[22px] text-[13.4px] text-[#5f737f]">
              <span className="w-[65px] pt-[10px]">涉疆人群</span>
              <b className="flex h-[34px] w-[93px] items-center justify-center border border-[#0a2f42] bg-[#07283a] text-[33px] leading-[34px] text-[#0d727d]">132</b>
            </div>
            <div className="ml-[17px] mt-[12px] flex">
              <span className={`${tag} w-[85px] bg-[#162c60]`}>乌鲁木齐 22人</span>
              <span className={`${tag} ml-[7px] w-[78px] bg-[#5c563f]`}>阿克苏 21人</span>
              <span className={`${tag} ml-[8px] w-[71px] bg-[#451a3b]`}>伊犁 34人</span>
              <span className={`${tag} ml-[8px] w-[68px] bg-[#33654f]`}>和田  11人</span>
              <span className={`${tag} ml-[10px] w-[85px] bg-[#083454]`}>柯尔克孜12人</span>
              <span className={`${tag} ml-[7px] w-[89px] bg-[#28366c]`}>吐鲁番市 13人</span>
            </div>
            <div className="mt-[16px] flex h-[34px] items-center pl-[21px] text-[13.4px] text-[#5f737f]">
              <span className="w-[68px] pt-[5px]">涉藏人群</span>
              <b className="flex h-[34px] w-[93px] items-center justify-center border border-[#0a2f42] bg-[#07283a] text-[33px] leading-[34px] text-[#0d727d]">110</b>
            </div>
            <div className="ml-[20px] mt-[17px] flex">
              <span className={`${tag} w-[85px] bg-[#12565f]`}>西藏  32人</span>
              <span className={`${tag} ml-[10px] w-[85px] bg-[#0d4270]`}>甘孜     23人</span>
              <span className={`${tag} ml-[9px] w-[85px] bg-[#14285e]`}>阿贝      32人</span>
              <span className={`${tag} ml-[9px] w-[85px] bg-[#25523a]`}>那曲市 32人</span>
              <span className={`${tag} ml-[17px] w-[72px] bg-[#6a3440]`}>喀什  14人</span>
              <span className={`${tag} ml-[16px] w-[85px] bg-[#274a82]`}>日喀则  22人</span>
            </div>
          </div>
        </Card>
      </div>
    </Panel>
  );
}

/* ---------- centre: decoration ---------- */
const TOP_LINE = 'M638 36.3H684L718 70.7H893L945 33.3H1601L1661 76.7H1829L1871 47H1915';
const LOW_LINE = 'M638 112H682L723.7 82.3H891L952 125.3H1608.4L1660.6 88.3H1834.5L1868.4 122.3H1915';
const FRAME = 'M640.5 146L663 125.7H872L900 146H1890.4V930.7L1912 945V1056L1890.4 1075H669L640.5 1054Z';

function Backdrop() {
  return (
    <svg viewBox="638 0 1277 1080" className="absolute inset-0 h-full w-full">
      <defs>
        <linearGradient id="sky" x1="0" x2="1"><stop offset="0" stopColor="#040d20" /><stop offset=".25" stopColor="#0c2946" /><stop offset=".55" stopColor="#194568" /><stop offset=".8" stopColor="#123c60" /><stop offset="1" stopColor="#0e2b4c" /></linearGradient>
        <linearGradient id="topStroke" gradientUnits="userSpaceOnUse" x1="638" y1="0" x2="1915" y2="0"><stop offset="0" stopColor="#3a22a8" /><stop offset=".2" stopColor="#3b3fb8" /><stop offset=".5" stopColor="#3064c8" /><stop offset=".72" stopColor="#2f8fcb" /><stop offset=".85" stopColor="#45b8c4" /><stop offset="1" stopColor="#35988f" /></linearGradient>
        <linearGradient id="lowStroke" gradientUnits="userSpaceOnUse" x1="638" y1="0" x2="1915" y2="0"><stop offset="0" stopColor="#0c2b33" /><stop offset=".15" stopColor="#25606b" /><stop offset=".28" stopColor="#3a9ac0" /><stop offset=".5" stopColor="#2fb0e0" /><stop offset=".7" stopColor="#3f6fd8" /><stop offset=".8" stopColor="#303a9a" /><stop offset="1" stopColor="#141b4a" /></linearGradient>
        <linearGradient id="core" x1="0" x2="1"><stop offset="0" stopColor="#0d2763" stopOpacity="0" /><stop offset=".14" stopColor="#0b2358" /><stop offset=".5" stopColor="#123a7a" /><stop offset=".86" stopColor="#0b2358" /><stop offset="1" stopColor="#0d2763" stopOpacity="0" /></linearGradient>
        <linearGradient id="under" x1="0" x2="1"><stop offset="0" stopColor="#020c14" /><stop offset=".5" stopColor="#081c42" /><stop offset="1" stopColor="#020a14" /></linearGradient>
        <linearGradient id="edge" gradientUnits="userSpaceOnUse" x1="0" y1="126" x2="0" y2="250"><stop offset="0" stopColor="#1358a4" /><stop offset="1" stopColor="#0f3f74" /></linearGradient>
        <filter id="soft" x="-5%" y="-60%" width="110%" height="220%"><feGaussianBlur stdDeviation="5" /></filter>
        <filter id="haze" x="-5%" y="-40%" width="110%" height="180%"><feGaussianBlur stdDeviation="9" /></filter>
        <clipPath id="frameClip"><path d={FRAME} /></clipPath>
      </defs>
      <rect x="638" y="0" width="1277" height="1080" fill="#020d16" />
      <rect x="638" y="60" width="1277" height="90" fill="url(#under)" />
      <path d={TOP_LINE + 'V0H638Z'} fill="url(#sky)" />
      <rect x="925" y="50" width="702" height="62" fill="url(#core)" filter="url(#haze)" />
      <path d={TOP_LINE} fill="none" stroke="url(#topStroke)" strokeWidth="8" filter="url(#soft)" opacity=".65" />
      <path d={TOP_LINE} fill="none" stroke="url(#topStroke)" strokeWidth="1.3" />
      <path d="M952 125.3H1608.4" fill="none" stroke="#1f4fb8" strokeWidth="7" filter="url(#haze)" opacity=".5" />
      <path d={LOW_LINE} fill="none" stroke="url(#lowStroke)" strokeWidth="1.3" />
      <path d="M1050 124.8H1500" stroke="#27a3dd" strokeWidth="2" opacity=".8" />
      <path d="M1277.5 0V146" stroke="#7f93a8" strokeWidth="1" opacity=".3" />
      <path d="M638 .5H1915" stroke="#32505f" />
      <path d="M640 1052L669 1078H1890L1915 1056V1080H638Z" fill="#283644" />
      <path d="M1393 1080l8 -5h22l12 5zM1480 1080l20 -5h60l16 5zM1690 1080l12 -5h26l10 5z" fill="#33594e" />
      <path d="M1430 1080l20 -5h46l22 5zM1740 1080l14 -5h40l18 5z" fill="#4a463f" />
      <rect x="1891" y="754" width="24" height="50" fill="#04152a" /><rect x="1891" y="860" width="11" height="38" fill="#2a343c" /><rect x="1891" y="908" width="11" height="24" fill="#26301f" />
      <path d={FRAME} fill="#012433" />
      <g clipPath="url(#frameClip)">
        <path d="M655 131L663 125.7H872L900 146H1890" fill="none" stroke="#0e55a0" strokeWidth="12" filter="url(#soft)" opacity=".75" />
      </g>
      <path d={FRAME} fill="none" stroke="url(#edge)" strokeWidth="1.3" />
      <path d="M640.8 1007V1053.5L669 1076H859" fill="none" stroke="#1360b4" strokeWidth="2.6" />
    </svg>
  );
}

/* ---------- centre: navigation ---------- */
const NAV: { label: string; mt: string; icon: React.ReactNode; on?: boolean }[] = [
  { label: '案件总览', mt: 'mt-[21px]', icon: <g fill="none" stroke="#07f0e6" strokeWidth="1.6"><path d="M.8 2.5h14.4v16.7H.8z" /><path d="M5 .9h6v3H5z" fill="#07f0e6" /><path d="M3.5 8h2M7 8h5.5M3.5 11.5h2M7 11.5h5.5M3.5 15h2M7 15h5.5" /></g> },
  { label: '案件信息', mt: 'mt-[29px]', icon: <><path d="M1.5 0H9v6.5h7V18.5a1.5 1.5 0 0 1-1.5 1.5h-13A1.5 1.5 0 0 1 0 18.5v-17A1.5 1.5 0 0 1 1.5 0z" fill="#f35b5b" /><path d="M10.3 0L16 5.3h-5.7z" fill="#f35b5b" /></> },
  { label: '案件统计', mt: 'mt-[33px]', icon: <><rect width="16" height="20" rx="1.5" fill="#4874f7" /><path d="M4.5 15V9.5M8 15V5M11.5 15v-3.5" stroke="#0b2450" strokeWidth="1.6" /></> },
  { label: '报警信息', mt: 'mt-[29px]', on: true, icon: <><path d="M2 15.5V8a6 6 0 0 1 12 0v7.5" fill="none" stroke="#ff0a60" strokeWidth="1.1" /><path d="M4 14.5V8a4 4 0 0 1 8 0v6.5z" fill="#ff0a60" /><rect x="-.5" y="15" width="17" height="4" rx="1.5" fill="#ff0a60" /></> },
  { label: '重点防治', mt: 'mt-[31px]', icon: <><rect width="16" height="20" rx="1.5" fill="#ff9a27" /><path d="M8 4.5l1.4 4.1h4.1l-3.3 2.5 1.2 4L8 12.7l-3.4 2.4 1.2-4-3.3-2.5h4.1z" fill="#0b2450" /></> },
  { label: '关注人员', mt: 'mt-[31px]', icon: <><rect width="16" height="20" rx="1.5" fill="#05f24c" /><circle cx="8" cy="7" r="3" fill="#0b2450" /><path d="M2.5 15.5c0-3 2-4.5 5.5-4.5s5.5 1.5 5.5 4.5z" fill="#0b2450" /></> },
];

function Sidebar() {
  return (
    <aside className="relative -mt-[2px] ml-[2px] flex h-[570px] w-[219px] flex-col pl-[33px]">
      <svg viewBox="0 0 219 570" className="absolute inset-0 h-full w-full">
        <defs><linearGradient id="side" x1="0" y1="0" x2="0" y2="1"><stop offset="0" stopColor="#093860" /><stop offset=".5" stopColor="#073058" /><stop offset="1" stopColor="#0a3258" /></linearGradient></defs>
        <path d="M.5 16.5L23 .5H218.3V569.5H.5Z" fill="url(#side)" stroke="#0f4c8e" strokeWidth="1.2" />
      </svg>
      {NAV.map(({ label, mt, icon, on }, i) => (
        <button key={label} className={`relative flex h-[41px] w-[157px] items-center pl-[18px] ${mt}`}>
          <svg viewBox="0 0 157 41" className="absolute inset-0 h-full w-full overflow-visible">
            <defs><linearGradient id={`nav${i}`} x1="0" y1="0" x2="0" y2="1"><stop offset="0" stopColor={on ? '#0f4478' : '#04264a'} /><stop offset="1" stopColor={on ? '#1f5fae' : '#03234c'} /></linearGradient></defs>
            <path d="M.5 15L16 .5H156.5V24L141 40.5H.5Z" fill={`url(#nav${i})`} stroke="#0d529a" strokeWidth="1" />
            <path d="M.5 15L16 .5H24M149 .5H156.5V24L141 40.5" fill="none" stroke="#1565b5" strokeWidth="1.6" />
          </svg>
          <svg viewBox="0 0 16 20" className="relative h-5 w-4 overflow-visible">{icon}</svg>
          <span className="relative ml-[8px] text-[23.3px] leading-[28px] text-white">{label}</span>
        </button>
      ))}
    </aside>
  );
}

/* ---------- centre: filters and table ---------- */
const Select = ({ text, cls }: { text: string; cls: string }) => (
  <div className={`flex h-[38px] items-center justify-between border border-[#12539c] bg-[#12345d] pl-3 pr-[8px] text-[19.6px] font-medium text-white ${cls}`}>
    {text}
    <svg viewBox="0 0 9 7" className="mt-1 h-[7px] w-[9px]"><path d="M0 0h9L4.5 7z" fill="#7f93ab" /></svg>
  </div>
);

const COLS = 'grid grid-cols-[241px_76px_68px_142px_63px_155px_69px_126px_58px] items-center justify-items-center';
const ROWS: [string, string, string, string, string, string, string][] = [
  ['金山卫镇创新街8号', '火灾', '2014.03.09', '周远民', '15811215432', '是', ''],
  ['企业大厦6栋1单元104', '抢劫', '2014.06.04', '张利', '13485967452', '是', 'pt-[3px]'],
  ['8号院1号楼3单元302', '打架', '2014.08.23', '张续蓬', '13896856352', '是', ''],
  ['8号院1号楼3单元202', '抢劫', '2015.05.12', '熊华艳', '13896552635', '是', 'pb-[2px]'],
  ['临高大厦1栋1单元102', '打架', '2015.12.29', '袁旭', '13181905337', '是', 'pb-[5px]'],
  ['名苑大厦5栋1单元102', '入室偷盗', '2016.07.11', '李康平', '13585968563', '是', 'pb-[9px]'],
  ['建设花苑1号楼一单元501', '打架', '2016.10.31', '王桂荣', '15053369987', '是', 'pb-[11px]'],
  ['东二街南三巷4号楼2单元201', '贪污行贿', '2017.01.06', '刘凯', '13485996352', '是', 'pb-[3px]'],
  ['东二街南三巷7号楼3单元202', '抢劫', '2017.07.22', '杨金风', '13785968566', '是', 'pb-[3px]'],
  ['企业大厦6栋1单元105', '打架', '2017.12.13', '王凤来', '13002708996', '否', 'pb-[3px]'],
];

function CaseTable() {
  return (
    <div className="mt-[11px] w-[998px] text-[15.8px] leading-5 text-[#f2f7fa]">
      <div className={`${COLS} h-11 border-b-2 border-[#1f6ba0] bg-[#1c5d88]`}>
        <span className="pr-[30px]">地点</span><span className="pt-[2px]">类型</span><span className="whitespace-nowrap pt-[3px]">报警原因</span><span className="pt-[2px]">记录时间</span><span className="pt-[2px]">报警人</span>
        <span className="pt-[3px]">报警人电话</span><span className="whitespace-nowrap pt-[2px]">是否出警</span><span className="pt-[2px]">出警人</span><span className="whitespace-nowrap pr-[3px] pt-[2px]">操作</span>
      </div>
      {ROWS.map(([place, why, date, who, tel, out, shift], i) => (
        <div key={i} className={`${COLS} h-[44.4px] ${i % 2 ? 'bg-[#1c5d88]' : 'bg-[#154d70]'}`}>
          <span className="whitespace-nowrap">{place}</span>
          <span className="pt-[2px]">紧急</span>
          <span className="whitespace-nowrap pt-[3px]">{why}</span>
          <span className="pt-[2px] text-[16.4px]">{date}</span>
          <span className="whitespace-nowrap pt-px">{who}</span>
          <span className="pt-[4px] text-[16.4px]">{tel}</span>
          <span className={shift}>{out}</span>
          <span className="pt-px">{who}</span>
          <svg viewBox="0 0 20 14" className="mr-[5px] mt-[2px] h-[14px] w-5" fill="none" stroke="#06b8b4" strokeWidth="1.4">
            <path d="M1 7C3.5 3 6.5 1 10 1s6.5 2 9 6c-2.5 4-5.5 6-9 6S3.5 11 1 7z" /><circle cx="10" cy="7" r="3.2" /><path d="M10 5.8v2.4" />
          </svg>
        </div>
      ))}
    </div>
  );
}

function Pager() {
  return (
    <div className="mb-[14px] flex h-10 items-center pl-[237px] pr-[54px] text-[12px] text-[#c3d0d6]">
      <span className="tracking-[0.8px]">每页显示</span>
      <span className="ml-[9px] flex h-[17px] w-[34px] items-center justify-center gap-[4px] rounded-[4px] border border-[#c3d0d6] text-[12px] leading-none text-white">
        10
        <svg viewBox="0 0 6 9" className="h-[9px] w-[6px]" fill="#fff"><path d="M0 3.5L3 0l3 3.5zM0 5.5h6L3 9z" /></svg>
      </span>
      <span className="ml-[17px] tracking-[0.9px]">当前显示第一页1至10项，共324322项</span>
      <span className="ml-auto mr-[7px] mt-[3px] text-white">上页</span>
      {['1', '2', '3', '4', '5', '6', '7', '······', '3120', '3121', '3122'].map((p, i) => (
        <span key={p} className={`mr-[0.65px] mt-px flex h-[17px] w-[22.2px] shrink-0 items-center justify-center whitespace-nowrap rounded-[1px] leading-none text-white ${p.length > 1 ? 'text-[9.3px]' : 'text-[11px]'} ${i ? 'border border-[#5d6d75]' : 'bg-[#12c9a4]'}`}>{p}</span>
      ))}
      <span className="ml-[4px] mt-[3px] text-[#12b89c]">下页</span>
    </div>
  );
}

/* ---------- centre: bottom charts ---------- */
const RINGS: [number, string, string, string, string, number, number][] = [
  [748.2, '#4874fa', '#4874fa', '136', '报警案件', 0, 0], [890.6, '#2396ae', '#3fd3ef', '56', '紧急案件', -90, 66],
  [1033, '#986d37', '#ff9a27', '66', '已出警案件', 0, 90], [1176, '#914c5c', '#f55b60', '24', '不紧急案件', 90, 180],
];
const AX = [1308, 1325, 1350, 1370.8, 1399.8, 1425, 1450.8, 1474.5, 1499, 1523, 1547, 1570.8, 1594.9, 1619.8, 1642.7, 1668, 1692, 1717, 1746.7, 1763.9, 1788, 1812.9, 1835.7, 1858.6];
const ALAST = [982.3, 982.3, 984, 961, 930, 958, 934, 969.3, 911.3, 929, 929.3, 930, 960, 941, 948, 971, 978, 955, 942, 935, 947, 958, 951, 961].map((y, i): Pt => [AX[i], y]);
const ANOW: Pt[] = [[1308, 999], [1325, 1003], [1350, 1007], [1374.9, 1003], [1399.8, 990.7], [1450, 1002], [1474.5, 935], [1499, 983], [1547, 942], [1594.9, 980], [1619, 990.3], [1642.7, 984], [1668, 994.3], [1692, 991], [1717, 1000], [1746.7, 985], [1763.9, 977], [1788, 915], [1812.9, 976], [1835.7, 976], [1858.6, 976.3]];
const ALX = [1327, 1383.5, 1432.9, 1487, 1539.4, 1590.8, 1640.2, 1694.9, 1743.9, 1795.7, 1842];

function BottomCards() {
  return (
    <div className="flex items-start gap-3 pl-[25px]">
      <Card bright size="h-[227px] w-[597px]">
        <Heading bright pos="pl-[17px] pt-[13px]" gap="gap-[5px]">报警案件信息</Heading>
        <div className="mr-[27px] mt-[13px] flex h-[25px] w-[82px] items-center justify-between justify-self-end border border-[#124f94] pl-2 pr-[3px] text-[12.8px] text-white">
          2017.12<svg viewBox="0 0 5 4" className="h-1 w-[5px]"><path d="M0 0h5L2.5 4z" fill="#71859c" /></svg>
        </div>
        <Chart box="663 826 597 227">
          {RINGS.map(([x, base, hi, v, label, a, b]) => (
            <g key={v} fill="none">
              <circle cx={x} cy="956.3" r="56.7" stroke={base} strokeWidth="4" />
              {b !== a && <path d={arc(x, 956.3, 56.7, a, b)} stroke={hi} strokeWidth="8" strokeLinecap="round" />}
              <T x={x - (v === '136' ? 3.5 : 0)} y={944.5} s={48} c="#fff" w={v === '136' ? 76 : undefined}>{v}</T>
              <T x={x + (v === '136' ? 1 : v === '56' ? 0 : 2.5)} y={982.5} s={13.8} c="#f4f8fa">{label}</T>
            </g>
          ))}
        </Chart>
      </Card>
      <Card bright size="h-[228px] w-[597px]">
        <Heading bright pos="pl-[17px] pt-[15px]" gap="gap-[5px]">报警案件区域统计</Heading>
        <Chart box="1272 826 597 228">
          <circle cx="1782.7" cy="856" r="3.2" fill="#7b7ff5" /><T x={1798.5} y={856.3} s={7.7} c="#dfe8ee">上月</T>
          <circle cx="1833.7" cy="856" r="3.2" fill="#1ce8ee" /><T x={1849.5} y={856.3} s={7.7} c="#dfe8ee">当月</T>
          {[[25, 882.7], [20, 908], [15, 936], [10, 956.7], [5, 978.7], [0, 1008]].map(([v, y]) => <T key={v} x={1301.8} y={y} s={7.4} a="end" c="#b9c9d2">{v}</T>)}
          <path d="M1308 887.5H1859M1308 912.5H1859M1308 936.5H1859M1308 961.5H1859M1308 985.5H1859" stroke="#38566c" />
          <path d={line(ALAST) + 'L1859 1010.5L1308 1010.5Z'} fill="#24306f" fillOpacity=".95" />
          <path d={line(ANOW) + 'L1859 1010.5L1308 1010.5Z'} fill="#20b0b8" fillOpacity=".68" />
          <path d={line(ALAST)} stroke="#5468c4" fill="none" />
          <path d={line(ANOW)} stroke="#1cc3d6" strokeWidth="1.2" fill="none" />
          <path d="M1308 1010.5H1859" stroke="#3a5f95" />
          {[...ALAST.slice(1), ...ANOW.slice(1)].map(([x, y]) => (
            <g key={x + ':' + y}><circle cx={x} cy={y} r="3" fill="#5aa8e8" opacity=".6" /><circle cx={x} cy={y} r="2" fill="#fff" /></g>
          ))}
          {STATIONS.map((s, i) => <T key={s} x={ALX[i]} y={1027} s={7} c="#c9d6de">{s}</T>)}
        </Chart>
      </Card>
    </div>
  );
}

function Centre() {
  return (
    <main className="relative h-[1080px] w-[1277px] shrink-0 overflow-hidden">
      <Backdrop />
      <div className="relative flex flex-col">
        <h1 className="h-[146px] pl-px pt-[53px] text-center text-[52px] font-medium leading-[60px] tracking-[4px] text-[#02f9f5] [text-shadow:0_0_12px_rgba(0,170,240,.75),0_0_26px_rgba(0,120,240,.6)]">
          金山工业区雪亮工程系统
        </h1>
        <div className="flex h-[58px] items-center pl-[345px] pr-[50px] pt-[8px]">
          <i className="h-[1.5px] w-[206px] bg-gradient-to-r from-transparent to-[#06bdb0]" /><Dot bright />
          <h2 className="ml-[10px] mr-[14px] whitespace-nowrap text-[25.5px] leading-[30px] text-[#08bfb2]">案件管理详情</h2>
          <Dot bright /><i className="h-[1.5px] w-[212px] bg-gradient-to-r from-[#06bdb0] to-transparent" />
          <svg viewBox="0 0 16 16" className="-mt-[2px] ml-auto size-4 overflow-visible" stroke="#12cda6" strokeWidth="2" strokeLinecap="round"><path d="M.8 .8L15.2 15.2M15.2 .8L.8 15.2" /></svg>
        </div>
        <div className="flex gap-3">
          <Sidebar />
          <div className="flex flex-col">
            <div className="ml-[2px] flex h-[69px] w-[997px] items-center bg-[#12355d] pb-[2px] pl-[21px]">
              <Select text="案件类型" cls="w-[137px]" />
              <Select text="已出警" cls="ml-[26px] w-[137px]" />
              <div className="ml-[25px] flex h-[38px] w-[204px] items-center border border-[#12539c] bg-[#12345d] pl-[18px] text-[19.6px] text-[#7388a3]">输入查询条件</div>
              <Select text="区域" cls="ml-[22px] w-[137px]" />
              <button className="ml-[23px] mt-px flex h-[33px] w-[88px] items-center justify-center gap-[7px] rounded-[16px] bg-[#02bcba] text-[16.8px] font-medium text-white">
                <svg viewBox="0 0 19 19" className="size-[19px]" fill="none" stroke="#fff" strokeWidth="1.6" strokeLinecap="round"><circle cx="11.5" cy="7.5" r="6.5" /><path d="M6.8 12.2L1 18" /></svg>
                查询
              </button>
              <button className="ml-[20px] mt-px flex h-[33px] w-[88px] items-center justify-center gap-[7px] rounded-[16px] bg-[#02bcba] text-[16.8px] font-medium text-white">
                <svg viewBox="0 0 18 18" className="size-[18px]" fill="none" stroke="#fff" strokeWidth="1.5" strokeLinecap="round"><path d="M12.5 2.6a7.5 7.5 0 1 1-6.8-.2M12 6.5V2.3h4" /></svg>
                刷新
              </button>
            </div>
            <CaseTable />
          </div>
        </div>
        <Pager />
        <BottomCards />
      </div>
    </main>
  );
}

export default function App() {
  return (
    <div className="flex h-[1080px] w-[2553px] overflow-hidden bg-[#020d16] [font-family:'Liberation_Sans','Noto_Sans_CJK_SC',sans-serif]">
      <div className="w-[638px] shrink-0"><Population /><SpecialGroups /><Cases /></div>
      <Centre />
      <div className="w-[638px] shrink-0"><Enterprises /><Railway /><Wifi /></div>
    </div>
  );
}
